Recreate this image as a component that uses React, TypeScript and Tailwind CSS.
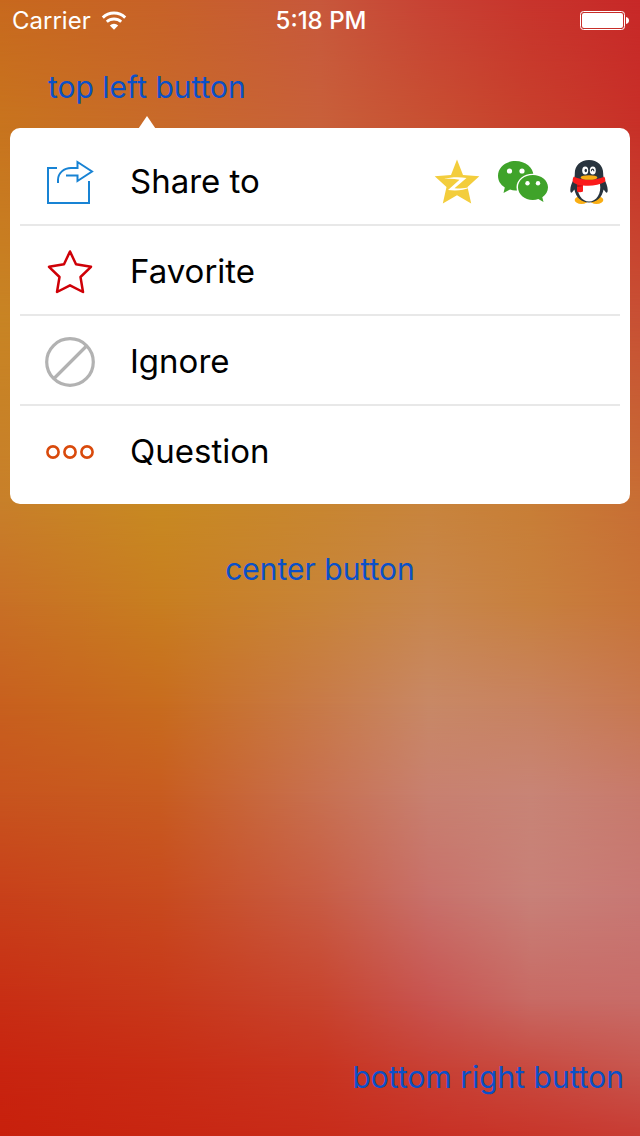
import React from "react";

type Row = { at: number; colors: string[] };

const STOPS = [0, 25, 50, 67, 83, 100];

const BACKDROP: Row[] = [
  { at: 0, colors: ["#c8691e", "#c86228", "#c8583c", "#c84234", "#c8342c", "#c82828"] },
  { at: 11, colors: ["#c8741e", "#c86a2a", "#c8603a", "#c85032", "#c8402c", "#c83028"] },
  { at: 28, colors: ["#c88424", "#c88028", "#c87830", "#c86c34", "#c85c34", "#c85034"] },
  { at: 44, colors: ["#c8802a", "#c88a22", "#c88630", "#c8843c", "#c87e36", "#c86e34"] },
  { at: 53, colors: ["#c87026", "#c87e20", "#c88438", "#c8864c", "#c8803e", "#c87438"] },
  { at: 62, colors: ["#c8601e", "#c86c1e", "#c87a48", "#c88866", "#c88260", "#c87850"] },
  { at: 70, colors: ["#c8541e", "#c85c20", "#c87050", "#c88070", "#c88476", "#c87a6c"] },
  { at: 79, colors: ["#c8401a", "#c84a1e", "#c85c44", "#c8706a", "#c88078", "#c87874"] },
  { at: 88, colors: ["#c82e14", "#c8381a", "#c8442e", "#c85450", "#c86a64", "#c86c68"] },
  { at: 94, colors: ["#c82410", "#c82c14", "#c83420", "#c84034", "#c84a40", "#c8564e"] },
  { at: 100, colors: ["#c8200c", "#c82612", "#c82c1a", "#c83024", "#c8362a", "#c83c34"] },
];

function Backdrop() {
  return (
    <div aria-hidden="true" className="absolute inset-0 -z-10">
      {BACKDROP.map((row, i) => {
        const fade =
          i === 0
            ? undefined
            : `linear-gradient(to bottom, transparent ${BACKDROP[i - 1].at}%, black ${row.at}%)`;
        const fill = row.colors.map((c, n) => `${c} ${STOPS[n]}%`).join(", ");
        return (
          <div
            key={row.at}
            className="absolute inset-0"
            style={{ backgroundImage: `linear-gradient(to right, ${fill})`, maskImage: fade }}
          />
        );
      })}
    </div>
  );
}

function WifiIcon() {
  return (
    <svg width="26" height="20" viewBox="0 0 26 20" fill="none" aria-hidden="true">
      <path d="M1.8 6.6a16.2 16.2 0 0 1 22.4 0" stroke="#fff" strokeWidth="3" />
      <path d="M5.8 10.8a10.6 10.6 0 0 1 14.4 0" stroke="#fff" strokeWidth="2.8" />
      <path d="M13 18.8 8.8 14.4a6 6 0 0 1 8.4 0Z" fill="#fff" />
    </svg>
  );
}

function BatteryIcon() {
  return (
    <svg width="50" height="20" viewBox="0 0 50 20" aria-hidden="true">
      <rect x="0.5" y="0.5" width="44" height="18" rx="3" fill="none" stroke="#fff" />
      <rect x="2" y="2" width="41" height="15" rx="2" fill="#fff" />
      <path d="M46 6c2 .6 3 1.800 3 3.500S48 12.400 46 13Z" fill="#fff" />
    </svg>
  );
}

function ShareIcon() {
  return (
    <svg width="50" height="50" viewBox="0 0 50 50" fill="none" stroke="#1883d4" strokeWidth="2" aria-hidden="true">
      <path d="M12 11H3v35h41V24" />
      <path d="M13 26v-3c0-7 6-12 13-12h6.500V5L47 14.500 32.500 24v-5.500H21" />
    </svg>
  );
}

function StarIcon() {
  return (
    <svg width="50" height="50" viewBox="0 0 50 50" fill="none" stroke="#cf0007" strokeWidth="2.500" strokeLinejoin="round" aria-hidden="true">
      <path d="M25 4.500 31 17.200 46 19.800 35.500 30 38 45 25 38.300 12 45 14.500 30 4 19.800 19 17.200Z" />
    </svg>
  );
}

function IgnoreIcon() {
  return (
    <svg width="50" height="50" viewBox="0 0 50 50" fill="none" stroke="#b2b2b2" strokeWidth="3.200" aria-hidden="true">
      <circle cx="25" cy="25" r="23.300" />
      <path d="M9 41.500 41.500 9" />
    </svg>
  );
}

function QuestionIcon() {
  return (
    <svg width="50" height="50" viewBox="0 0 50 50" fill="none" stroke="#d94a0c" strokeWidth="2.600" aria-hidden="true">
      <circle cx="8" cy="25" r="5.600" />
      <circle cx="25" cy="25" r="5.600" />
      <circle cx="42" cy="25" r="5.600" />
    </svg>
  );
}

function QzoneIcon() {
  return (
    <svg width="50" height="50" viewBox="0 0 50 50" aria-hidden="true">
      <path d="M25 2.500 31 18 47.300 19.200 35.500 30 39.200 46.500 25 38.200 10.800 46.500 14.500 30 2.700 19.200 19 18Z" fill="#f3cd3c" />
      <path d="M12 22c6-1.800 15-2.200 22.500-1L22.500 31.200c5.500.4 10.500.3 15.500-.9-6 3.200-14.500 3.600-22 2.700L27.500 22.700c-5-1-10-1.300-15.500-.7Z" fill="#fff" />
    </svg>
  );
}

function WeChatIcon() {
  return (
    <svg width="52" height="50" viewBox="0 0 52 50" aria-hidden="true">
      <path d="M18.500 4C8.600 4 1 10.500 1 18.800c0 5 2.500 9 6.800 11.600L6.500 36l6.500-3.400c2.200.7 4 .9 6.500.8 9.600-.3 17-6.500 17-14.600C36.500 10.500 28.400 4 18.500 4Z" fill="#3fa32a" />
      <path d="M35.800 16.800c-9.200 0-16.300 6-16.300 13.400s7.100 13.400 16.300 13.400c2 0 3.800-.3 5.500-.8l7 4-1.500-6.400c3-2.400 5.200-6 5.200-10.200 0-7.400-7-13.400-16.200-13.400Z" fill="#fff" />
      <path d="M35.800 18C27.400 18 21 23.300 21 30.300s6.400 12.700 14.800 12.700c2 0 3.900-.3 5.500-.9l5.200 2.900-1.200-4.700c3.400-2.300 5.700-5.700 5.700-10C51 23.300 44.200 18 35.800 18Z" fill="#3fa32a" />
      <g fill="#fff">
        <circle cx="12.500" cy="14" r="2.600" />
        <circle cx="25" cy="14" r="2.600" />
        <circle cx="30.500" cy="26.200" r="2.200" />
        <circle cx="41" cy="26.200" r="2.200" />
      </g>
    </svg>
  );
}

function QQIcon() {
  return (
    <svg width="50" height="50" viewBox="0 0 50 50" aria-hidden="true">
      <ellipse cx="17.500" cy="43" rx="6.800" ry="4" fill="#f9ae14" />
      <ellipse cx="32.500" cy="43" rx="6.800" ry="4" fill="#f9ae14" />
      <path d="M25 3C16.500 3 10.800 8.500 10.800 16.500c0 2-.3 4-1 5.500C8 26 6.300 29 6.300 33c0 2.800 1 3.500 2.100 2l2-2.500C12 40.500 17.500 45.500 25 45.500s13-5 14.600-13l2 2.500c1.100 1.500 2.100.8 2.100-2 0-4-1.700-7-3.500-11-.7-1.500-1-3.500-1-5.500C39.200 8.500 33.500 3 25 3Z" fill="#28343e" />
      <path d="M14 27h22c1.500 9.500-3.500 17.500-11 17.500S12.500 36.500 14 27Z" fill="#fff" />
      <path d="M9.800 19.800c9 4 21.400 4 30.400 0 1 1.200 1.300 3 1 5-6 3.400-14.400 4.400-22.200 3.600v6.200c-1.500 1-4.500 1-6 0v-7.200c-1.900-.6-3.500-1.500-4.200-2.600-.3-2 0-3.800 1-5Z" fill="#fb1b1b" />
      <path d="M13 27.500c2.200.8 4 1 6 1.100-1 1-3.300 1.600-6 1.400Z" fill="#c50f16" />
      <ellipse cx="21.200" cy="13.500" rx="3" ry="3.900" fill="#fff" />
      <ellipse cx="28.800" cy="13.500" rx="3" ry="3.900" fill="#fff" />
      <ellipse cx="21.800" cy="13.500" rx="1.200" ry="1.800" fill="#28343e" />
      <path d="M27.300 14.200c0-2.800 2.600-2.800 2.600 0" fill="none" stroke="#28343e" strokeWidth="1.100" />
      <ellipse cx="25" cy="20.500" rx="8.400" ry="2.300" fill="#f9ae14" />
    </svg>
  );
}

const SHARE_TARGETS = [
  { label: "QZone", icon: <QzoneIcon /> },
  { label: "WeChat", icon: <WeChatIcon /> },
  { label: "QQ", icon: <QQIcon /> },
];

const ITEMS = [
  { label: "Share to", icon: <ShareIcon />, share: true },
  { label: "Favorite", icon: <StarIcon /> },
  { label: "Ignore", icon: <IgnoreIcon /> },
  { label: "Question", icon: <QuestionIcon /> },
];

export default function App() {
  return (
    <main className="relative isolate flex min-h-screen flex-col font-['Inter',sans-serif]">
      <Backdrop />

      <header className="grid h-[42px] grid-cols-3 items-center pl-3 pr-2.5 text-[24px] text-white">
        <div className="flex items-center gap-2.5">
          <span>Carrier</span>
          <WifiIcon />
        </div>
        <time className="text-center font-medium whitespace-nowrap">5:18 PM</time>
        <div className="flex justify-end">
          <BatteryIcon />
        </div>
      </header>

      <div className="ml-12 mt-[23px] flex flex-col items-center self-start">
        <button type="button" className="h-11 text-[30px] text-[#0a50c8]">
          top left button
        </button>
        <svg className="mt-[7px]" width="20" height="12" viewBox="0 0 20 12" aria-hidden="true">
          <path d="M10 0 18.200 12H1.800Z" fill="#fff" />
        </svg>
      </div>

      <ul className="mx-2.5 rounded-[10px] bg-white px-2.5 py-2">
        {ITEMS.map((item) => (
          <li
            key={item.label}
            className="flex h-[90px] items-center border-b-2 border-[#e8e8e8] pt-1 pr-1.5 last:border-transparent"
          >
            <button type="button" className="flex h-full flex-1 items-center gap-[35px] pl-[25px] text-left text-[33px] text-black">
              {item.icon}
              <span>{item.label}</span>
            </button>
            {item.share && (
              <div className="flex gap-[15px]">
                {SHARE_TARGETS.map((target) => (
                  <button key={target.label} type="button" aria-label={target.label}>
                    {target.icon}
                  </button>
                ))}
              </div>
            )}
          </li>
        ))}
      </ul>

      <button type="button" className="mt-[43px] h-11 self-center text-[30px] text-[#0a50c8]">
        center button
      </button>

      <button type="button" className="mr-4 mb-[37px] mt-auto h-11 self-end text-[30px] text-[#0a50c8]">
        bottom right button
      </button>
    </main>
  );
}
